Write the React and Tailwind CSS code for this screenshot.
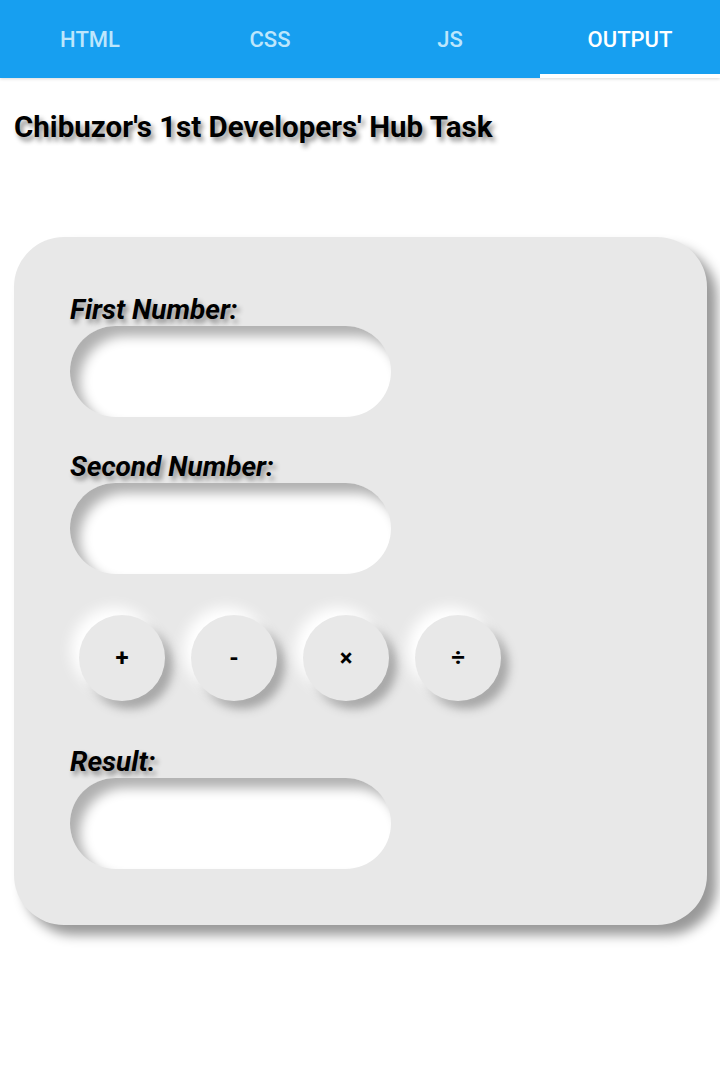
export default function App() {
  const tabs = ["HTML", "CSS", "JS", "OUTPUT"];
  const Field = ({ label }) => (
    <div className="flex flex-col">
      <div className="text-[28px] leading-[30px] font-bold italic text-black [text-shadow:3px_4px_5px_#888]">
        {label}
      </div>
      <div className="mt-[1px] w-[321px] h-[91px] rounded-full bg-white shadow-[inset_10px_10px_12px_#b0b0b0]" />
    </div>
  );
  return (
    <div className="w-[720px] min-h-[1091px] bg-white" style={{ fontFamily: "Roboto, 'Noto Sans', sans-serif" }}>
      <div className="h-[78px] bg-[#179ff0] grid grid-cols-4 shadow-[0_1px_3px_rgba(0,0,0,0.15)]">
        {tabs.map((t, i) => (
          <div key={t} className="relative flex items-center justify-center">
            <span className={`text-[22px] font-medium ${i === 3 ? "text-white" : "text-[#bde6fc]"}`}>{t}</span>
            {i === 3 && <div className="absolute left-0 right-0 bottom-0 h-[4px] bg-white" />}
          </div>
        ))}
      </div>
      <h1 className="mt-[32px] ml-[14px] text-[29.5px] leading-[34px] font-bold text-black [text-shadow:3px_4px_5px_#888]">
        Chibuzor's 1st Developers' Hub Task
      </h1>
      <div className="mt-[93px] ml-[14px] w-[693px] h-[688px] rounded-[50px] bg-[#e8e8e8] shadow-[10px_10px_12px_#999] pl-[56px] pt-[58px]">
        <Field label="First Number:" />
        <div className="mt-[35px]">
          <Field label="Second Number:" />
        </div>
        <div className="mt-[41px] ml-[9px] flex gap-[26px]">
          {["+", "-", "×", "÷"].map((s) => (
            <div
              key={s}
              className="w-[86px] h-[86px] rounded-full bg-[#e8e8e8] flex items-center justify-center text-[24px] font-bold text-black shadow-[-8px_-8px_14px_#ffffff,8px_8px_10px_#a8a8a8]"
            >
              {s}
            </div>
          ))}
        </div>
        <div className="mt-[46px]">
          <Field label="Result:" />
        </div>
      </div>
    </div>
  );
}
